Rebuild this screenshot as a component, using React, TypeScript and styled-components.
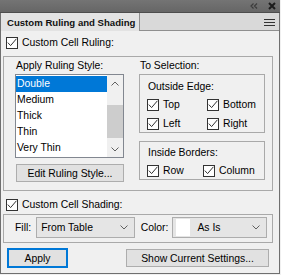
import styled, { createGlobalStyle } from 'styled-components'

const Global = createGlobalStyle`
  html, body {
    margin: 0;
    padding: 0;
    background: #f0f0f0;
  }
  body {
    font-family: "Liberation Sans", Arial, sans-serif;
    font-size: 10.4px;
    color: #000;
  }
`

const Panel = styled.div`
  width: 280px;
  height: 274px;
  box-sizing: border-box;
  border: 1px solid #6f6f6f;
  border-top: none;
  display: flex;
  flex-direction: column;
  background: #f0f0f0;
`

const TitleBar = styled.div`
  height: 12px;
  margin: 0 -1px;
  background: linear-gradient(#747474, #666);
  border-bottom: 1px solid #4d4d4d;
  display: flex;
  align-items: center;
  justify-content: flex-end;
  gap: 10px;
  padding-right: 4px;
`

const TabStrip = styled.div`
  height: 18px;
  display: flex;
  background: #f0f0f0;
`

const Tab = styled.div`
  background: #e3e3e3;
  border-right: 1px solid #8f8f8f;
  padding: 0 4px 0 6px;
  display: flex;
  align-items: center;
  font-size: 9.6px;
  font-weight: bold;
  color: #111;
`

const TabRest = styled.div`
  flex: 1;
  background: #d9d9d9;
  border-bottom: 1px solid #8f8f8f;
  display: flex;
  align-items: center;
  justify-content: flex-end;
  padding-right: 4px;
`

const Body = styled.div`
  flex: 1;
  display: flex;
  flex-direction: column;
  padding: 0 6px 0 2px;
`

const CheckRow = styled.label<{ $top?: number; $left?: number }>`
  display: flex;
  align-items: center;
  gap: 4px;
  height: 13px;
  margin-top: ${p => p.$top ?? 0}px;
  margin-left: ${p => p.$left ?? 0}px;
  white-space: nowrap;
`

const Box = styled.span`
  width: 12px;
  height: 12px;
  box-sizing: border-box;
  border: 1px solid #333;
  background: #fff;
  display: flex;
  align-items: center;
  justify-content: center;
  flex: none;
`

const Group = styled.div<{ $top: number }>`
  margin-top: ${p => p.$top}px;
  border: 1px solid #a9a9a9;
`

const RulingGrid = styled.div`
  display: grid;
  grid-template-columns: 109px 126px;
  column-gap: 15px;
  padding: 3px 5px 8px 11px;
`

const Column = styled.div`
  display: flex;
  flex-direction: column;
`

const Label = styled.div`
  height: 12px;
  line-height: 12px;
  margin-left: 1px;
  white-space: nowrap;
`

const ListBox = styled.div`
  margin-top: 2px;
  height: 84px;
  box-sizing: border-box;
  border: 1px solid #828790;
  background: #fff;
  display: flex;
`

const Items = styled.div`
  flex: 1;
  padding-top: 1px;
`

const Item = styled.div<{ $selected?: boolean }>`
  height: 16px;
  line-height: 16px;
  padding-left: 1px;
  background: ${p => (p.$selected ? '#0078d7' : 'transparent')};
  color: ${p => (p.$selected ? '#fff' : '#000')};
`

const ScrollBar = styled.div`
  width: 16px;
  background: #f0f0f0;
  display: grid;
  grid-template-rows: 16px 1fr 16px;
`

const ScrollArrow = styled.div`
  display: flex;
  align-items: center;
  justify-content: center;
`

const Track = styled.div`
  position: relative;
`

const Thumb = styled.div`
  position: absolute;
  left: 0;
  right: 0;
  top: 14px;
  height: 33px;
  background: #cdcdcd;
`

const Button = styled.div<{ $width: number; $focused?: boolean }>`
  width: ${p => p.$width}px;
  height: ${p => (p.$focused ? 20 : 18)}px;
  box-sizing: border-box;
  border: ${p => (p.$focused ? '2px solid #0078d7' : '1px solid #adadad')};
  background: #e1e1e1;
  display: flex;
  align-items: center;
  justify-content: center;
  white-space: nowrap;
`

const EditButton = styled(Button)`
  margin: 6px 0 0 1px;
`

const SubGroup = styled.div<{ $top: number; $padTop: number }>`
  margin-top: ${p => p.$top}px;
  border: 1px solid #a9a9a9;
  padding: ${p => p.$padTop}px 4px 2px 7px;
  display: flex;
  flex-direction: column;
`

const CheckGrid = styled.div<{ $col: number }>`
  display: grid;
  grid-template-columns: ${p => p.$col}px auto;
  row-gap: 6px;
  margin-top: 5px;
`

const ShadingRow = styled.div`
  display: flex;
  align-items: center;
  padding: 2px 5px 4px 11px;
`

const Select = styled.div<{ $width: number }>`
  width: ${p => p.$width}px;
  height: 21px;
  box-sizing: border-box;
  border: 1px solid #adadad;
  background: #e5e5e5;
  display: flex;
  align-items: center;
  padding: 0 6px 0 3px;
`

const SelectText = styled.span`
  flex: 1;
  padding-left: 1px;
`

const Swatch = styled.span`
  width: 14px;
  height: 17px;
  background: #fff;
  margin-right: 6px;
`

const FieldLabel = styled.span<{ $gap: number; $lead?: number }>`
  margin-left: ${p => p.$lead ?? 0}px;
  margin-right: ${p => p.$gap}px;
`

const ButtonRow = styled.div`
  margin-top: 5px;
  display: flex;
  align-items: center;
  justify-content: space-between;
  padding: 0 4px;
`

const Check = () => (
  <Box>
    <svg width="10" height="10" viewBox="0 0 10 10">
      <path d="M0.8 4.6 L3.6 7.6 L9.4 0.8" fill="none" stroke="#333" strokeWidth="1" />
    </svg>
  </Box>
)

const Chevron = ({ up }: { up?: boolean }) => (
  <svg width="8" height="5" viewBox="0 0 8 5">
    <path d={up ? 'M0.5 4.5 L4 1 L7.5 4.5' : 'M0.5 0.5 L4 4 L7.5 0.5'} fill="none" stroke="#606060" strokeWidth="1" />
  </svg>
)

export default function App() {
  return (
    <>
      <Global />
      <Panel>
        <TitleBar>
          <svg width="8" height="6" viewBox="0 0 8 6">
            <path d="M3.5 0.5 L1 3 L3.5 5.5 M7 0.5 L4.5 3 L7 5.5" fill="none" stroke="#3c3c3c" strokeWidth="1.2" />
          </svg>
          <svg width="8" height="8" viewBox="0 0 8 8">
            <path d="M1 1 L7 7 M7 1 L1 7" fill="none" stroke="#1c1c1c" strokeWidth="2" />
          </svg>
        </TitleBar>
        <TabStrip>
          <Tab>Custom Ruling and Shading</Tab>
          <TabRest>
            <svg width="11" height="8" viewBox="0 0 11 8">
              <path d="M0 1.5 H11 M0 4.5 H11 M0 7.5 H11" stroke="#333" strokeWidth="1" />
            </svg>
          </TabRest>
        </TabStrip>
        <Body>
          <CheckRow $top={5} $left={3}>
            <Check />
            Custom Cell Ruling:
          </CheckRow>
          <Group $top={7}>
            <RulingGrid>
              <Column>
                <Label>Apply Ruling Style:</Label>
                <ListBox>
                  <Items>
                    <Item $selected>Double</Item>
                    <Item>Medium</Item>
                    <Item>Thick</Item>
                    <Item>Thin</Item>
                    <Item>Very Thin</Item>
                  </Items>
                  <ScrollBar>
                    <ScrollArrow><Chevron up /></ScrollArrow>
                    <Track><Thumb /></Track>
                    <ScrollArrow><Chevron /></ScrollArrow>
                  </ScrollBar>
                </ListBox>
                <EditButton $width={108}>Edit Ruling Style...</EditButton>
              </Column>
              <Column>
                <Label>To Selection:</Label>
                <SubGroup $top={2} $padTop={6}>
                  <Label>Outside Edge:</Label>
                  <CheckGrid $col={60}>
                    <CheckRow><Check />Top</CheckRow>
                    <CheckRow><Check />Bottom</CheckRow>
                    <CheckRow><Check />Left</CheckRow>
                    <CheckRow><Check />Right</CheckRow>
                  </CheckGrid>
                </SubGroup>
                <SubGroup $top={8} $padTop={5}>
                  <Label>Inside Borders:</Label>
                  <CheckGrid $col={56}>
                    <CheckRow><Check />Row</CheckRow>
                    <CheckRow><Check />Column</CheckRow>
                  </CheckGrid>
                </SubGroup>
              </Column>
            </RulingGrid>
          </Group>
          <CheckRow $top={7} $left={3}>
            <Check />
            Custom Cell Shading:
          </CheckRow>
          <Group $top={3}>
            <ShadingRow>
              <FieldLabel $gap={5}>Fill:</FieldLabel>
              <Select $width={100}>
                <SelectText>From Table</SelectText>
                <Chevron />
              </Select>
              <FieldLabel $lead={6} $gap={4}>Color:</FieldLabel>
              <Select $width={96}>
                <Swatch />
                <SelectText>As Is</SelectText>
                <Chevron />
              </Select>
            </ShadingRow>
          </Group>
          <ButtonRow>
            <Button $width={61} $focused>Apply</Button>
            <Button $width={143}>Show Current Settings...</Button>
          </ButtonRow>
        </Body>
      </Panel>
    </>
  )
}
